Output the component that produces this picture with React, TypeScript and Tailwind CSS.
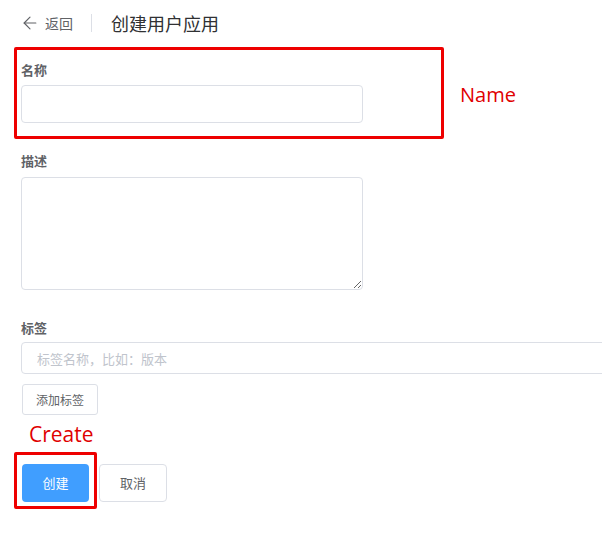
import React from "react";
import { ArrowLeft } from "lucide-react";

const font = { fontFamily: '"Noto Sans CJK SC", "Noto Sans", sans-serif' };

export default function App() {
  return (
    <div
      className="relative w-[602px] h-[555px] overflow-hidden bg-white"
      style={font}
    >
      {/* header */}
      <div className="flex items-center h-[45px] pl-[20px]">
        <ArrowLeft size={20} strokeWidth={1.4} className="text-[#606266]" />
        <span className="ml-[5px] text-[14px] leading-[20px] text-[#606266]">返回</span>
        <div className="ml-[18px] w-px h-[18px] bg-[#dcdfe6]" />
        <span className="ml-[19px] text-[18px] leading-[24px] text-[#303133]">创建用户应用</span>
      </div>

      {/* form */}
      <div className="pl-[21px] pt-[15px] flex flex-col items-start">
        <label className="text-[13px] leading-[20px] font-bold text-[#606266]">名称</label>
        <input
          className="mt-[5px] w-[342px] h-[38px] border border-[#dcdfe6] rounded-[4px] px-[15px] text-[13px] outline-none"
        />

        <label className="mt-[28px] text-[13px] leading-[20px] font-bold text-[#606266]">描述</label>
        <textarea
          className="mt-[6px] w-[342px] h-[113px] border border-[#dcdfe6] rounded-[4px] px-[15px] py-[5px] text-[13px] outline-none resize-y"
        />

        <label className="mt-[28px] text-[13px] leading-[20px] font-bold text-[#606266]">标签</label>
        <input
          placeholder="标签名称，比如：版本"
          className="mt-[4px] w-[600px] h-[32px] border border-[#dcdfe6] rounded-[4px] px-[15px] text-[13px] outline-none placeholder:text-[#c0c4cc]"
        />
        <button className="mt-[10px] ml-px w-[76px] h-[31px] border border-[#dcdfe6] rounded-[3px] text-[12px] text-[#606266] bg-white">
          添加标签
        </button>

        <div className="mt-[49px] ml-px flex gap-[10px]">
          <button className="w-[67px] h-[38px] rounded-[4px] bg-[#409eff] text-white text-[13px]">
            创建
          </button>
          <button className="w-[68px] h-[38px] rounded-[4px] border border-[#dcdfe6] bg-white text-[#606266] text-[13px]">
            取消
          </button>
        </div>
      </div>

      {/* annotations */}
      <div className="absolute left-[14px] top-[47px] w-[430px] h-[92px] border-[3px] border-[#ee0000] rounded-[2px]" />
      <div
        className="absolute left-[460px] top-[81px] text-[20px] leading-[28px] text-[#e00000]"
        style={{ fontFamily: '"Open Sans", sans-serif' }}
      >
        Name
      </div>
      <div className="absolute left-[14px] top-[452px] w-[83px] h-[57px] border-[3px] border-[#ee0000] rounded-[2px]" />
      <div
        className="absolute left-[29px] top-[419px] text-[21px] leading-[30px] text-[#e00000]"
        style={{ fontFamily: '"Open Sans", sans-serif' }}
      >
        Create
      </div>
    </div>
  );
}
